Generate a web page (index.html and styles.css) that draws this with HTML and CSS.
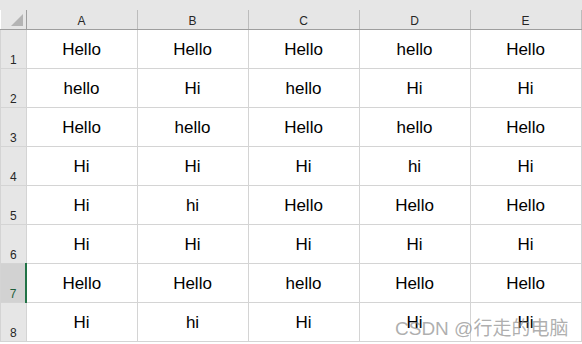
FILE: index.html
```html
<!DOCTYPE html>
<html lang="en">
<head>
    <meta charset="UTF-8">
    <title>Sheet</title>
    <link rel="stylesheet" href="styles.css">
</head>
<body>
    <div class="sheet">
        <div class="top-strip"></div>
        <table class="grid">
            <tr class="col-head">
                <th class="corner"><span class="corner-mark"></span></th>
                <th>A</th><th>B</th><th>C</th><th>D</th><th>E</th>
            </tr>
            <tr><th class="row-head">1</th><td>Hello</td><td>Hello</td><td>Hello</td><td>hello</td><td>Hello</td></tr>
            <tr><th class="row-head">2</th><td>hello</td><td>Hi</td><td>hello</td><td>Hi</td><td>Hi</td></tr>
            <tr><th class="row-head">3</th><td>Hello</td><td>hello</td><td>Hello</td><td>hello</td><td>Hello</td></tr>
            <tr><th class="row-head">4</th><td>Hi</td><td>Hi</td><td>Hi</td><td>hi</td><td>Hi</td></tr>
            <tr><th class="row-head">5</th><td>Hi</td><td>hi</td><td>Hello</td><td>Hello</td><td>Hello</td></tr>
            <tr><th class="row-head">6</th><td>Hi</td><td>Hi</td><td>Hi</td><td>Hi</td><td>Hi</td></tr>
            <tr><th class="row-head active">7</th><td>Hello</td><td>Hello</td><td>hello</td><td>Hello</td><td>Hello</td></tr>
            <tr><th class="row-head">8</th><td>Hi</td><td>hi</td><td>Hi</td><td>Hi</td><td>Hi</td></tr>
        </table>
        <div class="watermark">CSDN @行走的电脑</div>
    </div>
</body>
</html>
```

FILE: styles.css
```css
body {
    margin: 0;
    background-color: white;
    font-family: 'Liberation Sans', 'Noto Sans CJK SC', sans-serif;
    overflow: hidden;
}
.sheet {
    position: relative;
    width: 582px;
    height: 344px;
}
.top-strip {
    height: 10px;
    background-color: #e6e6e6;
}
.grid {
    border-collapse: collapse;
    table-layout: fixed;
}
.grid th, .grid td {
    padding: 0;
    border: 1px solid #d4d4d4;
}
.col-head th {
    height: 19px;
    background-color: #e6e6e6;
    border-top: none;
    border-left: none;
    border-bottom: 1px solid #9e9e9e;
    border-right: 1px solid #bcbcbc;
    font-size: 12px;
    font-weight: normal;
    color: #262626;
    width: 110px;
    vertical-align: bottom;
    line-height: 16px;
}
.col-head th.corner {
    width: 24px;
    border-right: 1px solid #9e9e9e;
    position: relative;
}
.corner-mark {
    position: absolute;
    right: 3px;
    bottom: 3px;
    width: 0;
    height: 0;
    border-left: 12px solid transparent;
    border-bottom: 12px solid #b4b4b4;
}
.row-head {
    width: 24px;
    height: 38px;
    background-color: #e6e6e6;
    border-left: none;
    border-right: 1px solid #9e9e9e;
    border-bottom: 1px solid #c6c6c6;
    font-size: 12px;
    font-weight: normal;
    color: #262626;
    vertical-align: bottom;
    line-height: 15px;
    padding-bottom: 2px;
}
.row-head.active {
    background-color: #d2d2d2;
    border-right: 2px solid #217346;
    color: #1e5e3a;
}
.grid td {
    height: 36px;
    padding-top: 2px;
    text-align: center;
    vertical-align: middle;
    font-size: 17px;
    color: #000;
}
.watermark {
    position: absolute;
    left: 395px;
    top: 313px;
    font-size: 19px;
    color: rgba(140, 140, 140, 0.7);
    white-space: nowrap;
}
```
